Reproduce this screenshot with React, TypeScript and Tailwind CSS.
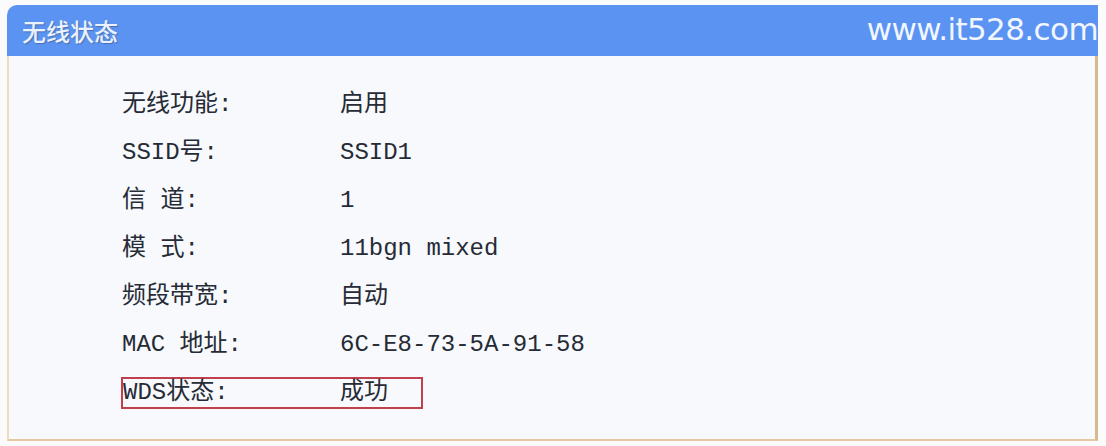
const ROWS: [string, string][] = [
  ["无线功能:", "启用"],
  ["SSID号:", "SSID1"],
  ["信 道:", "1"],
  ["模 式:", "11bgn mixed"],
  ["频段带宽:", "自动"],
  ["MAC 地址:", "6C-E8-73-5A-91-58"],
];

const MONO = "font-['Liberation_Mono','Noto_Sans_CJK_SC',monospace]";

export default function App() {
  return (
    <div className="h-[446px] w-[1106px] overflow-hidden bg-[#fbfbfb] pl-[7px] pt-[5px]">
      <div className="w-[1091px]">
        {/* Header */}
        <div className="flex h-[51px] items-center justify-between rounded-tl-[10px] bg-[#5b93f2] pl-[15px]">
          <span className="font-['Noto_Sans_CJK_SC',sans-serif] text-[24px] font-medium text-[#eaf1ff] [text-shadow:1px_1px_1px_#4a6fae]">
            无线状态
          </span>
          <span className="-mt-[3px] font-['DejaVu_Sans',sans-serif] text-[31px] tracking-[-0.6px] text-[#f2f6ff]">
            www.it528.com
          </span>
        </div>

        {/* Body */}
        <div className={`h-[385px] border-b-[2px] border-l-[2px] border-r-[3px] border-b-[#e2c9a0] border-l-[#efdcc0] border-r-[#d9b98c] bg-[#f7f9fc] pl-[113px] pt-[25px] text-[24px] text-[#262b36] ${MONO}`}>
          {ROWS.map(([k, v]) => (
            <div key={k} className="flex h-[48px] items-center">
              <span className="w-[218px] whitespace-pre">{k}</span>
              <span>{v}</span>
            </div>
          ))}
          <div className="flex h-[48px] items-center">
            <div className="-ml-[1px] flex h-[32px] w-[302px] items-center border-[2px] border-[#c0404e]">
              <span className="w-[217px]">WDS状态:</span>
              <span>成功</span>
            </div>
          </div>
        </div>
      </div>
    </div>
  );
}
